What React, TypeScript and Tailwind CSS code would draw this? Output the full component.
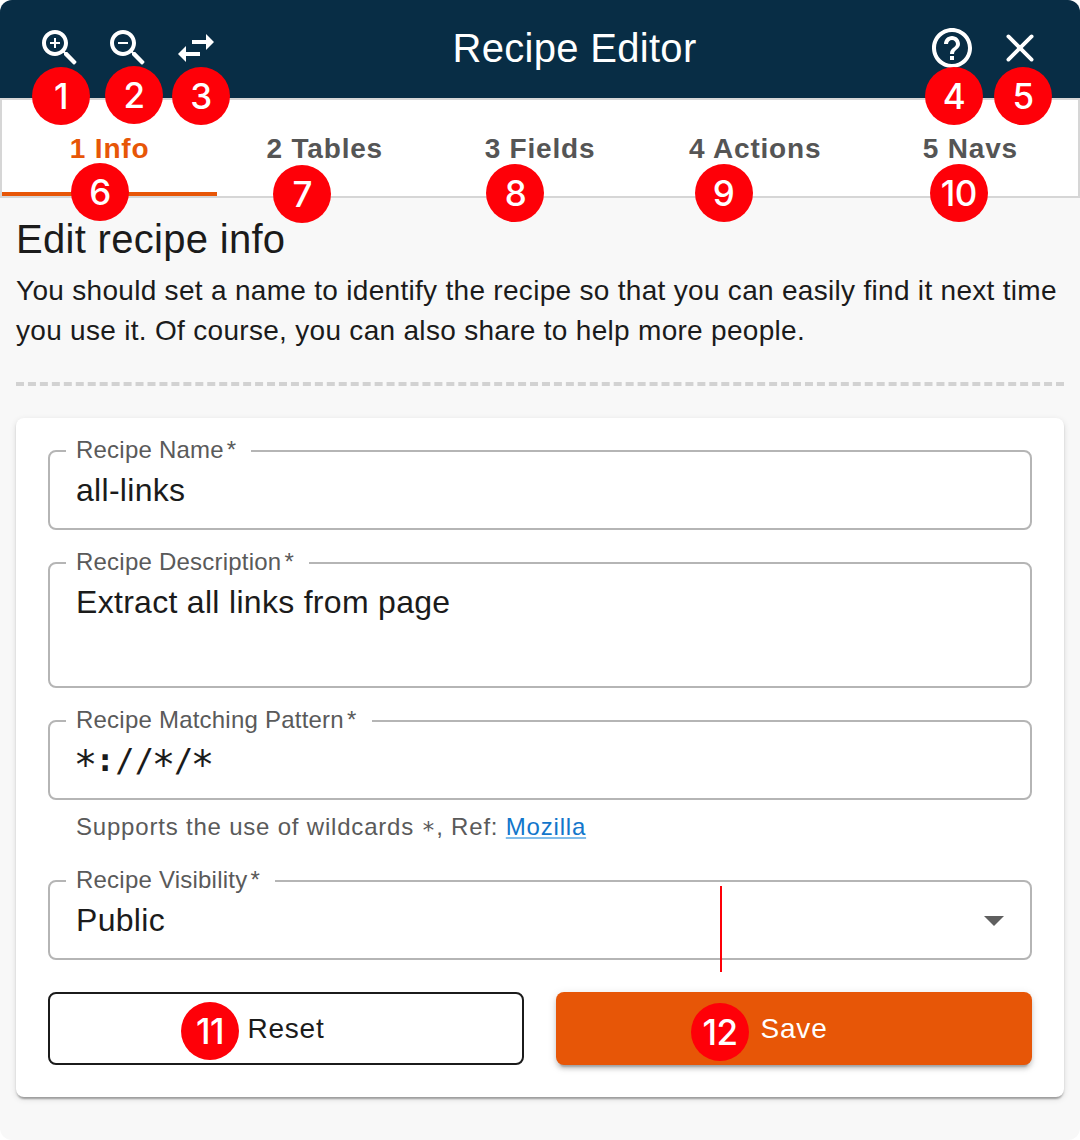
import React from "react";

type IconProps = { d: string; className?: string };

function Icon({ d, className = "" }: IconProps) {
  return (
    <svg viewBox="0 0 24 24" className={`size-12 shrink-0 fill-white ${className}`} aria-hidden="true">
      <path d={d} />
    </svg>
  );
}

const LENS =
  "M15.5 14h-.79l-.28-.27C15.41 12.59 16 11.11 16 9.5 16 5.91 13.09 3 9.5 3S3 5.91 3 9.5 5.91 16 9.5 16c1.61 0 3.09-.59 4.23-1.57l.27.28v.79l4.6 4.6q.4.35.8 0l.7-.7q.35-.4 0-.8l-4.6-4.67zm-6 0C7.01 14 5 11.99 5 9.5S7.01 5 9.5 5 14 7.01 14 9.5 11.99 14 9.5 14z";
const ZOOM_IN = LENS + "M12 10h-2v2H9v-2H7V9h2V7h1v2h2v1z";
const ZOOM_OUT = LENS + "M7 9h5v1H7z";
const SWAP =
  "M6.99 11L3 15l3.99 4v-3H14v-2H6.99v-3zM21 9l-3.99-4v3H10v2h7.01v3L21 9z";
const HELP =
  "M11 18h2v-2h-2v2zm1-16C6.48 2 2 6.48 2 12s4.48 10 10 10 10-4.48 10-10S17.52 2 12 2zm0 18c-4.41 0-8-3.59-8-8s3.59-8 8-8 8 3.59 8 8-3.59 8-8 8zm0-14c-2.21 0-4 1.79-4 4h2c0-1.1.9-2 2-2s2 .9 2 2c0 2-3 1.75-3 5h2c0-2.25 3-2.5 3-5 0-2.21-1.79-4-4-4z";

function CloseIcon() {
  return (
    <svg
      viewBox="0 0 24 24"
      className="size-12 shrink-0 fill-none stroke-white stroke-[1.9]"
      strokeLinecap="round"
      aria-hidden="true"
    >
      <path d="M6.2 6.2l11.6 11.6M17.8 6.2L6.2 17.8" />
    </svg>
  );
}

function Badge({ n, className }: { n: number; className: string }) {
  return (
    <span
      className={`absolute z-10 flex size-[58px] items-center justify-center rounded-full bg-[#fe0008] font-['Inter',sans-serif] text-[35px] font-medium leading-none tracking-[-0.5px] text-white ${className}`}
    >
      {n}
    </span>
  );
}

type FieldProps = {
  label: string;
  legendWidth: string;
  height: string;
  children: React.ReactNode;
};

function Field({ label, legendWidth, height, children }: FieldProps) {
  return (
    <div className={`relative flex rounded-lg border-2 border-[#b5b5b5] ${height}`}>
      <div
        className={`absolute -top-[16px] left-4 flex h-7 items-center whitespace-nowrap bg-white pl-[10px] text-[24px] leading-7 tracking-[0.22px] text-[#5a5a5a] ${legendWidth}`}
      >
        {label}
        <span className="ml-[3px]">*</span>
      </div>
      <div className="flex h-[76px] flex-1 items-center px-[26px] text-[32px] leading-[46px] tracking-[0.3px] text-[#1b1b1b]">
        {children}
      </div>
    </div>
  );
}

/* Monospaced pattern; asterisks sit on the middle of the line. */
function Pattern({ value }: { value: string }) {
  return (
    <span className="font-['DejaVu_Sans_Mono',monospace]">
      {value.split("").map((c, i) =>
        c === "*" ? (
          <span key={i} className="inline-block translate-y-[5px] scale-[1.22]">
            {c}
          </span>
        ) : (
          <span key={i} className={c === ":" ? "font-bold" : ""}>
            {c}
          </span>
        )
      )}
    </span>
  );
}

const TABS = [
  { label: "1 Info", n: 6, pos: "left-[69px] top-[63px]" },
  { label: "2 Tables", n: 7, pos: "left-[56px] top-[65px]" },
  { label: "3 Fields", n: 8, pos: "left-[54px] top-[64px]" },
  { label: "4 Actions", n: 9, pos: "left-[47px] top-[64px]" },
  { label: "5 Navs", n: 10, pos: "left-[67px] top-[64px]" },
];

export default function App() {
  return (
    <div className="h-[1140px] w-[1080px] bg-white font-['Liberation_Sans',sans-serif]">
      <div className="flex h-full flex-col overflow-hidden rounded-[12px] bg-[#f8f8f8]">
        <header className="flex h-[98px] items-center bg-[#082d45] px-9 pb-[2px]">
          <div className="flex w-[184px] gap-5">
            <div className="relative">
              <Icon d={ZOOM_IN} />
              <Badge n={1} className="-left-[4px] top-[43px]" />
            </div>
            <div className="relative">
              <Icon d={ZOOM_OUT} />
              <Badge n={2} className="left-[1px] top-[42px]" />
            </div>
            <div className="relative">
              <Icon d={SWAP} />
              <Badge n={3} className="left-0 top-[43px]" />
            </div>
          </div>
          <h1 className="flex-1 pl-[69px] text-center text-[40px] leading-[48px] tracking-[0.3px] text-white">
            Recipe Editor
          </h1>
          <div className="flex w-[184px] justify-end gap-5">
            <div className="relative">
              <Icon d={HELP} />
              <Badge n={4} className="-left-[3px] top-[43px]" />
            </div>
            <div className="relative">
              <CloseIcon />
              <Badge n={5} className="-left-[2px] top-[43px]" />
            </div>
          </div>
        </header>

        <nav className="grid h-[100px] grid-cols-5 border-2 border-[#d6d6d6] bg-white">
          {TABS.map((t, i) => (
            <div
              key={t.label}
              className={`relative flex items-center justify-center text-[28px] font-bold leading-8 tracking-[0.8px] ${
                i === 0 ? "border-b-4 border-[#e75607] pt-[6px] text-[#e75607]" : "pt-[2px] text-[#555555]"
              }`}
            >
              {t.label}
              <Badge n={t.n} className={t.pos} />
            </div>
          ))}
        </nav>

        <main className="px-4 pt-[17px] text-[#1b1b1b]">
          <h2 className="text-[40px] leading-[48px] tracking-[0.3px]">Edit recipe info</h2>
          <p className="mt-2 w-[1060px] text-[28px] leading-10 tracking-[0.3px]">
            You should set a name to identify the recipe so that you can easily find it next time
            <br />
            you use it. Of course, you can also share to help more people.
          </p>
          <div className="mt-[31px] border-t-4 border-dashed border-[#d2d2d2]" />

          <section className="mt-8 h-[679px] rounded-lg bg-white px-8 pt-8 shadow-[0_4px_2px_-2px_rgba(0,0,0,0.2),0_2px_2px_0_rgba(0,0,0,0.14),0_2px_6px_0_rgba(0,0,0,0.12)]">
            <Field label="Recipe Name" legendWidth="w-[185px]" height="h-[80px]">
              all-links
            </Field>
            <div className="h-8" />
            <Field label="Recipe Description" legendWidth="w-[243px]" height="h-[126px]">
              Extract all links from page
            </Field>
            <div className="h-8" />
            <Field label="Recipe Matching Pattern" legendWidth="w-[306px]" height="h-[80px]">
              <Pattern value="*://*/*" />
            </Field>
            <p className="mt-[7px] h-10 pl-7 text-[24px] leading-10 tracking-[0.8px] text-[#5a5a5a]">
              Supports the use of wildcards{" "}
              <span className="inline-block translate-y-[3px] font-['DejaVu_Sans_Mono',monospace] text-[23px] leading-none">
                *
              </span>
              , Ref:{" "}
              <a className="text-[#1276cb] underline decoration-[#82bdea] decoration-2 underline-offset-[2px] [text-decoration-skip-ink:none]">
                Mozilla
              </a>
            </p>
            <div className="h-[33px]" />
            <div className="relative">
              <Field label="Recipe Visibility" legendWidth="w-[209px]" height="h-[80px]">
                <span className="flex-1">Public</span>
                <svg viewBox="0 0 20 10" className="mt-[2px] h-[10px] w-5 fill-[#5f5f5f]">
                  <path d="M0 0h20L10 10z" />
                </svg>
              </Field>
              <span className="absolute left-[672px] top-[6px] h-[86px] w-[2px] bg-[#fe0008]" />
            </div>
            <div className="mt-8 grid grid-cols-2 gap-8 text-[28px] tracking-[0.8px]">
              <div className="relative flex h-[73px] items-center justify-center rounded-lg border-2 border-[#1b1b1b]">
                Reset
                <Badge n={11} className="left-[131px] top-[8px]" />
              </div>
              <div className="relative flex h-[73px] items-center justify-center rounded-lg bg-[#e75607] text-white shadow-[0_6px_2px_-4px_rgba(0,0,0,0.2),0_4px_4px_0_rgba(0,0,0,0.14),0_2px_10px_0_rgba(0,0,0,0.12)]">
                Save
                <Badge n={12} className="left-[135px] top-[11px]" />
              </div>
            </div>
          </section>
        </main>
      </div>
    </div>
  );
}
